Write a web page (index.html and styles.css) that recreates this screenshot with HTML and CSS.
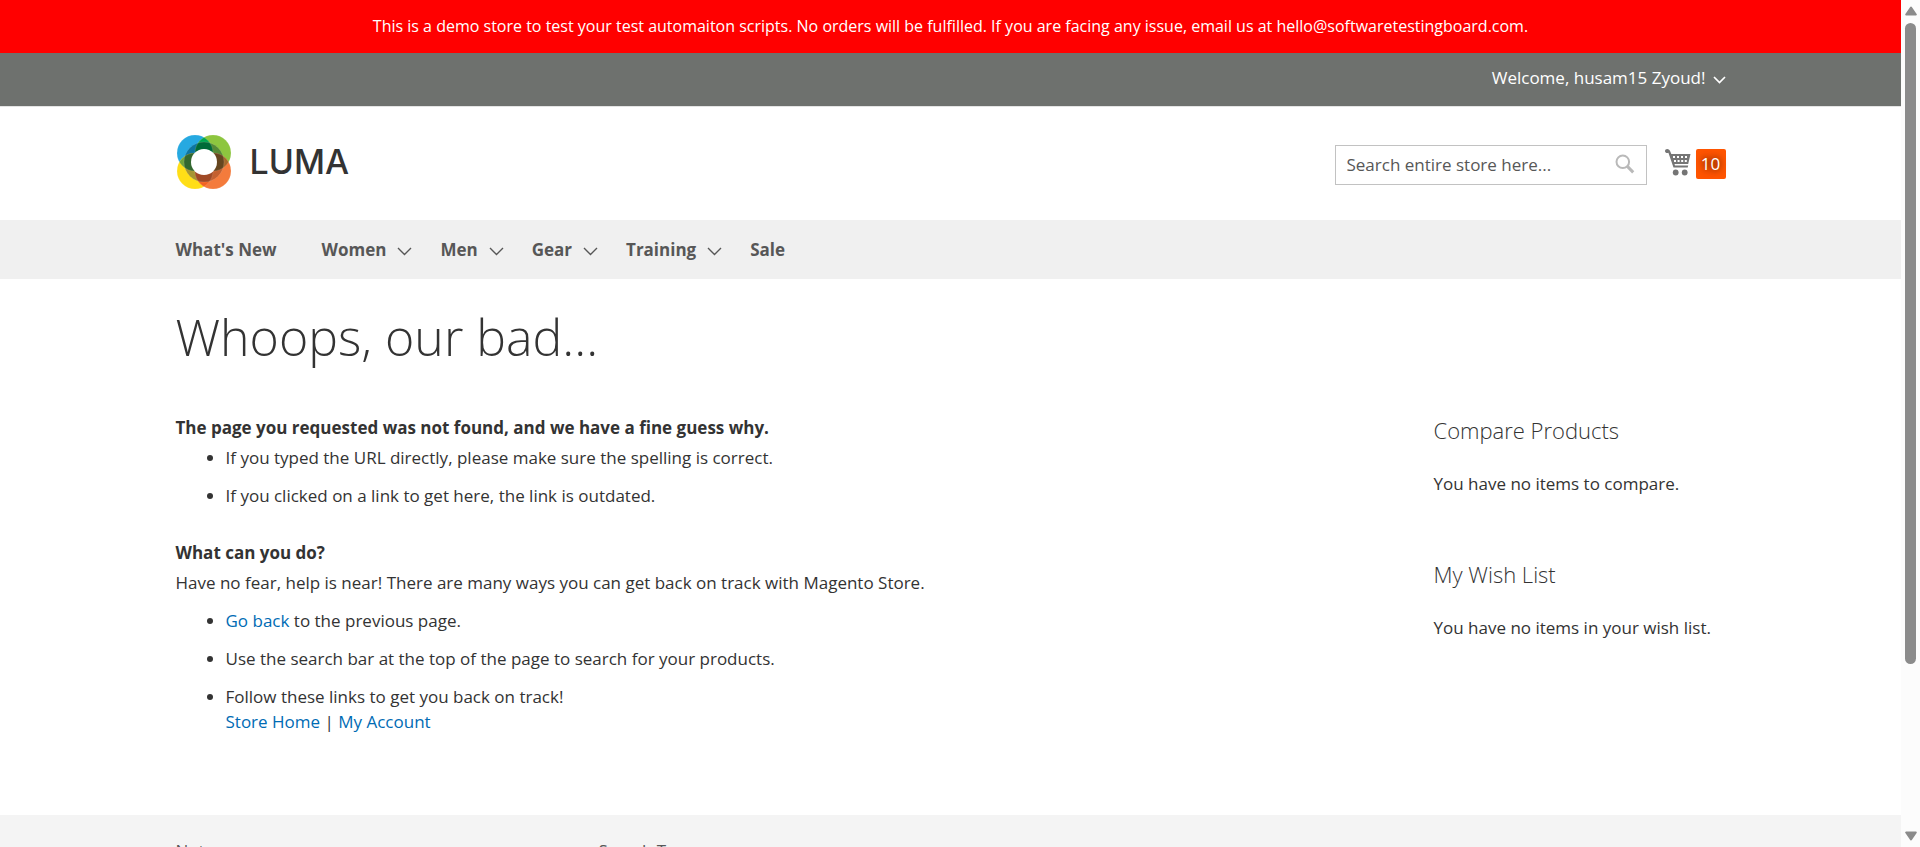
FILE: index.html
```html
<!DOCTYPE html>
<html lang="en">
<head>
<meta charset="utf-8">
<title>404 Not Found</title>
<link rel="stylesheet" href="styles.css">
</head>
<body>
<div class="window">
  <div class="page">
    <p class="demo-notice">This is a demo store to test your test automaiton scripts. No orders will be fulfilled. If you are facing any issue, email us at hello@softwaretestingboard.com.</p>

    <header>
      <div class="panel">
        <div class="container panel-inner">
          <button class="customer" type="button">Welcome, husam15 Zyoud!
            <svg class="customer-arrow" viewBox="0 0 13 8" aria-hidden="true"><path d="M1 1l5.5 5.5L12 1" fill="none" stroke="currentColor" stroke-width="1.7"/></svg>
          </button>
        </div>
      </div>
      <div class="container header-content">
        <a class="logo" href="#" aria-label="LUMA">
          <svg class="logo-mark" viewBox="0 0 54 54" aria-hidden="true">
            <defs>
              <clipPath id="tl"><circle cx="18" cy="18" r="18"/></clipPath>
              <clipPath id="tr"><circle cx="36" cy="18" r="18"/></clipPath>
              <clipPath id="bl"><circle cx="18" cy="36" r="18"/></clipPath>
              <clipPath id="ring"><circle cx="27" cy="27" r="20"/></clipPath>
            </defs>
            <circle cx="18" cy="18" r="18" fill="#26a9e1"/>
            <circle cx="36" cy="18" r="18" fill="#8dc63f"/>
            <circle cx="18" cy="36" r="18" fill="#ffde17"/>
            <circle cx="36" cy="36" r="18" fill="#f47b3c"/>
            <circle cx="36" cy="18" r="18" fill="#00a550" clip-path="url(#tl)"/>
            <circle cx="18" cy="36" r="18" fill="#6fa23c" clip-path="url(#tl)"/>
            <circle cx="36" cy="36" r="18" fill="#a3682b" clip-path="url(#tr)"/>
            <circle cx="36" cy="36" r="18" fill="#f26522" clip-path="url(#bl)"/>
            <g clip-path="url(#ring)">
              <circle cx="18" cy="18" r="18" fill="#0d759f"/>
              <circle cx="36" cy="18" r="18" fill="#568a36"/>
              <circle cx="18" cy="36" r="18" fill="#a69532"/>
              <circle cx="36" cy="36" r="18" fill="#c4602f"/>
              <circle cx="36" cy="18" r="18" fill="#006b38" clip-path="url(#tl)"/>
              <circle cx="18" cy="36" r="18" fill="#336830" clip-path="url(#tl)"/>
              <circle cx="36" cy="36" r="18" fill="#65461f" clip-path="url(#tr)"/>
              <circle cx="36" cy="36" r="18" fill="#a04a26" clip-path="url(#bl)"/>
            </g>
            <g fill="none" stroke="#fff" stroke-opacity=".3" stroke-width=".4">
              <circle cx="18" cy="18" r="18"/><circle cx="36" cy="18" r="18"/>
              <circle cx="18" cy="36" r="18"/><circle cx="36" cy="36" r="18"/>
              <circle cx="27" cy="27" r="20"/>
            </g>
            <circle cx="27" cy="27" r="13" fill="#fff"/>
          </svg>
          <span class="logo-name">LUMA</span>
        </a>
        <div class="header-tools">
          <form class="search">
            <input class="search-input" type="text" placeholder="Search entire store here..." aria-label="Search">
            <button class="search-button" type="button" aria-label="Search">
              <svg class="search-icon" viewBox="0 0 20 20" aria-hidden="true"><g fill="none" stroke="#b9b9b9"><circle cx="7.8" cy="7.8" r="6.3" stroke-width="2"/><path d="M12.4 12.4l5.8 6" stroke-width="3"/></g></svg>
            </button>
          </form>
          <a class="cart" href="#" aria-label="My Cart, 10 items">
            <svg class="cart-icon" viewBox="0 0 26 27" aria-hidden="true">
              <path d="M0 2C0 .8 1 0 2.200 0 3.600 0 4.800 1 5.300 2.400L6.300 5H25.500L23.200 15H9.500L10 16.500H23.200L22.700 18.500H8.500L3.400 3.700C2.300 4.500 0 4 0 2z" fill="#757575"/>
              <path d="M8 7h2v2h-2zM12 7h2v2h-2zM16 7h2v2h-2zM20 7h2v2h-2zM9 11h2v2h-2zM12.600 11h2v2h-2zM16.200 11h2v2h-2zM19.800 11h2v2h-2z" fill="#fff"/>
              <circle cx="10.700" cy="23.500" r="2.900" fill="#757575"/><circle cx="19.700" cy="23.500" r="2.900" fill="#757575"/>
            </svg>
            <span class="cart-count">10</span>
          </a>
        </div>
      </div>
    </header>

    <nav class="nav">
      <div class="container nav-inner">
        <a class="nav-link nav-first" href="#">What's New</a>
        <a class="nav-link" href="#">Women <svg class="nav-arrow" viewBox="0 0 15 9" aria-hidden="true"><path d="M1 1l6.500 6.500L14 1"/></svg></a>
        <a class="nav-link" href="#">Men <svg class="nav-arrow" viewBox="0 0 15 9" aria-hidden="true"><path d="M1 1l6.500 6.500L14 1"/></svg></a>
        <a class="nav-link" href="#">Gear <svg class="nav-arrow" viewBox="0 0 15 9" aria-hidden="true"><path d="M1 1l6.500 6.500L14 1"/></svg></a>
        <a class="nav-link" href="#">Training <svg class="nav-arrow" viewBox="0 0 15 9" aria-hidden="true"><path d="M1 1l6.500 6.500L14 1"/></svg></a>
        <a class="nav-link" href="#">Sale</a>
      </div>
    </nav>

    <main class="container main">
      <h1 class="title">Whoops, our bad...</h1>
      <div class="columns">
        <div class="content">
          <section class="block">
            <h2 class="question">The page you requested was not found, and we have a fine guess why.</h2>
            <ul class="list">
              <li>If you typed the URL directly, please make sure the spelling is correct.</li>
              <li>If you clicked on a link to get here, the link is outdated.</li>
            </ul>
          </section>
          <section class="block">
            <h2 class="question">What can you do?</h2>
            <p class="answer">Have no fear, help is near! There are many ways you can get back on track with Magento Store.</p>
            <ul class="list">
              <li><a class="link" href="#">Go back</a> to the previous page.</li>
              <li>Use the search bar at the top of the page to search for your products.</li>
              <li>Follow these links to get you back on track!<br><a class="link" href="#">Store Home</a> | <a class="link" href="#">My Account</a></li>
            </ul>
          </section>
        </div>
        <aside class="sidebar">
          <section>
            <h2 class="side-title">Compare Products</h2>
            <p class="side-text">You have no items to compare.</p>
          </section>
          <section>
            <h2 class="side-title">My Wish List</h2>
            <p class="side-text">You have no items in your wish list.</p>
          </section>
        </aside>
      </div>
    </main>

    <footer class="footer">
      <div class="container footer-inner">
        <a class="footer-link" href="#">Notes</a>
        <a class="footer-link" href="#">Search Terms</a>
      </div>
    </footer>
  </div>

  <div class="scrollbar" aria-hidden="true">
    <svg class="scroll-arrow" viewBox="0 0 12 10"><path d="M6 1.500L10.800 8.500H1.200z"/></svg>
    <div class="track"><div class="thumb"></div></div>
    <svg class="scroll-arrow" viewBox="0 0 12 10"><path d="M6 8.500L1.200 1.500H10.800z"/></svg>
  </div>
</div>
</body>
</html>
```
FILE: styles.css
```css
* { box-sizing: border-box; }

body {
  margin: 0;
  background: #fff;
  color: #333;
  font: 400 17px/25px "Open Sans", "Noto Sans", sans-serif;
}

h1, h2, p, ul { margin: 0; }
a { color: inherit; text-decoration: none; }
button, input { font: inherit; color: inherit; }
button { border: 0; padding: 0; background: none; cursor: pointer; }
svg { display: block; flex: none; }

.window {
  display: grid;
  grid-template-columns: minmax(0, 1fr) 19px;
  height: 100vh;
  overflow: hidden;
}
.page { overflow: hidden; }
.container { max-width: 1600px; margin: 0 auto; padding: 0 25px; }

.demo-notice {
  padding: 14px 25px;
  background: #f00;
  color: #fff;
  font-size: 16px;
  text-align: center;
}

.panel { background: #6e716e; border-bottom: 1px solid #e4e4e4; }
.panel-inner { display: flex; justify-content: flex-end; padding-top: 12px; padding-bottom: 16px; }
.customer { display: flex; align-items: center; gap: 7px; color: #fff; }
.customer-arrow { width: 13px; height: 8px; margin-top: 4px; }

.header-content {
  display: flex;
  justify-content: space-between;
  align-items: flex-start;
  padding-top: 28px;
  padding-bottom: 31px;
}
.logo { display: flex; align-items: center; gap: 19px; padding-left: 1px; }
.logo-mark { width: 54px; height: 54px; }
.logo-name { font: 500 34px/54px Inter, "Open Sans", sans-serif; }
.header-tools { display: flex; align-items: flex-start; gap: 18px; padding-top: 10px; }
.search {
  display: flex;
  align-items: center;
  width: 312px;
  height: 40px;
  padding: 0 11px 2px;
  border: 1px solid #c2c2c2;
}
.search-input { flex: 1; min-width: 0; border: 0; padding: 0; background: none; outline: 0; }
.search-input::placeholder { color: #575757; opacity: 1; }
.search-icon { width: 20px; height: 20px; }
.cart { display: flex; align-items: flex-start; gap: 5px; padding-top: 4px; }
.cart-icon { width: 26px; height: 27px; }
.cart-count {
  width: 30px;
  border-radius: 2px;
  background: #ff5501;
  color: #fff;
  line-height: 30px;
  text-align: center;
  text-shadow: 0 0 6px #602000, 0 0 10px #803000;
}

.nav { background: #f0f0f0; }
.nav-inner { display: flex; gap: 28px; padding-top: 17px; padding-bottom: 17px; }
.nav-link { display: flex; align-items: center; gap: 11px; color: #575757; font-weight: 700; }
.nav-first { margin-right: 17px; }
.nav-arrow { width: 15px; height: 9px; margin-top: 3px; fill: none; stroke: #575757; stroke-width: 1.4; }

.main { padding-top: 31px; padding-bottom: 81px; }
.title { margin-bottom: 50px; font-size: 50px; font-weight: 300; line-height: 55px; }
.columns { display: grid; grid-template-columns: minmax(0, 1fr) 292px; }
.block + .block { margin-top: 32px; }
.question { margin-bottom: 5px; font-size: 17px; font-weight: 700; line-height: 25px; }
.answer { margin-bottom: 13px; }
.list { display: flex; flex-direction: column; gap: 13px; padding-left: 50px; }
.link { color: #006bb4; }

.sidebar { display: flex; flex-direction: column; gap: 66px; padding-top: 3px; }
.side-title { margin-bottom: 28px; font-size: 22px; font-weight: 300; line-height: 25px; }

.footer { background: #f4f4f4; }
.footer-inner { display: flex; padding-top: 23px; padding-bottom: 50px; }
.footer-link { flex: 0 0 423px; color: #575757; }

.scrollbar {
  display: flex;
  flex-direction: column;
  align-items: center;
  gap: 7px;
  padding: 6px 0;
  background: #fcfcfc;
}
.scroll-arrow { width: 12px; height: 10px; fill: #8b8b8b; stroke: #8b8b8b; stroke-width: 2; stroke-linejoin: round; }
.track { flex: 1; }
.thumb { width: 11px; height: 80%; border-radius: 6px; background: #8b8b8b; }
```
